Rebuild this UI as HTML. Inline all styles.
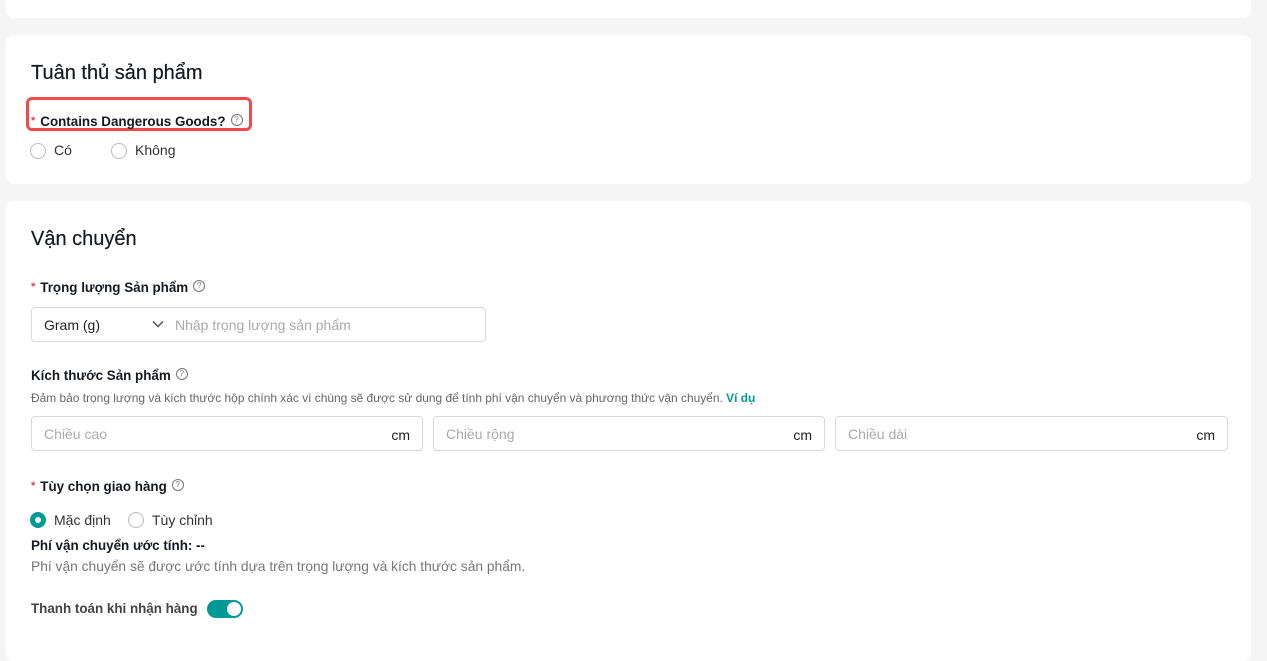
<!DOCTYPE html>
<html><head><meta charset="utf-8"><style>
*{box-sizing:border-box;margin:0;padding:0}
body{width:1267px;height:634px;overflow:hidden;background:#f5f5f5;font-family:"Liberation Sans",Arial,sans-serif;color:#161823;position:relative}
.card{position:absolute;left:6px;width:1245px;background:#fff;border-radius:8px}
.abs{position:absolute;white-space:nowrap}
.h{font-size:20px;color:#161823;-webkit-text-stroke:0.2px #161823}
.lbl{font-size:13.4px;font-weight:bold}
.star{color:#f0394b;font-size:11px;margin-right:5px;vertical-align:2px}
.q{display:inline-block;width:12px;height:12px;border:1px solid #777;border-radius:50%;font-size:8px;line-height:10px;text-align:center;color:#777;font-weight:normal;margin-left:5px;vertical-align:middle;position:relative;top:-2px}
.radio{position:absolute;width:16px;height:16px;border:1px solid #bbb;border-radius:50%}
.radio.on{border:5px solid #009995}
.t14{font-size:14px;color:#333}
.inp{position:absolute;height:35px;border:1px solid #d9d9d9;border-radius:4px;font-size:14px;color:#aaa}
</style></head><body>
<div class="card" style="top:-10px;height:28px"></div>
<div class="card" style="top:35px;height:149px"></div>
<div class="card" style="top:201px;height:460px"></div>

<div class="abs h" style="left:31px;top:62px">Tuân thủ sản phẩm</div>
<div class="abs" style="left:26px;top:97px;width:226px;height:34px;border:3px solid #f04a4a;border-radius:6px"></div>
<div class="abs lbl" style="left:31px;top:114px"><span class="star">*</span>Contains Dangerous Goods?<span class="q">?</span></div>
<div class="radio" style="left:30px;top:143px"></div><div class="abs t14" style="left:54px;top:142px">Có</div>
<div class="radio" style="left:111px;top:143px"></div><div class="abs t14" style="left:135px;top:142px">Không</div>

<div class="abs h" style="left:31px;top:228px">Vận chuyển</div>
<div class="abs lbl" style="left:31px;top:280px"><span class="star">*</span>Trọng lượng Sản phẩm<span class="q">?</span></div>
<div class="inp" style="left:31px;top:307px;width:455px">
 <span class="abs" style="left:12px;top:9px;color:#222">Gram (g)</span>
 <svg class="abs" style="left:120px;top:12px" width="12" height="8" viewBox="0 0 12 8"><path d="M1 1.5l5 5 5-5" fill="none" stroke="#555" stroke-width="1.5"/></svg>
 <span class="abs" style="left:143px;top:9px">Nhập trọng lượng sản phẩm</span>
</div>
<div class="abs lbl" style="left:31px;top:368px">Kích thước Sản phẩm<span class="q">?</span></div>
<div class="abs" style="left:31px;top:391px;font-size:11.95px;color:#666">Đảm bảo trọng lượng và kích thước hộp chính xác vì chúng sẽ được sử dụng để tính phí vận chuyển và phương thức vận chuyển. <span style="color:#009995;font-weight:bold">Ví dụ</span></div>
<div class="inp" style="left:31px;top:416px;width:392px"><span class="abs" style="left:12px;top:9px">Chiều cao</span><span class="abs" style="right:12px;top:10px;color:#222">cm</span></div>
<div class="inp" style="left:433px;top:416px;width:392px"><span class="abs" style="left:12px;top:9px">Chiều rộng</span><span class="abs" style="right:12px;top:10px;color:#222">cm</span></div>
<div class="inp" style="left:835px;top:416px;width:393px"><span class="abs" style="left:12px;top:9px">Chiều dài</span><span class="abs" style="right:12px;top:10px;color:#222">cm</span></div>

<div class="abs lbl" style="left:31px;top:479px"><span class="star">*</span>Tùy chọn giao hàng<span class="q">?</span></div>
<div class="radio on" style="left:30px;top:512px"></div><div class="abs t14" style="left:54px;top:512px">Mặc định</div>
<div class="radio" style="left:128px;top:512px"></div><div class="abs t14" style="left:152px;top:512px">Tùy chỉnh</div>
<div class="abs lbl" style="left:31px;top:538px">Phí vận chuyển ước tính: --</div>
<div class="abs" style="left:31px;top:559px;font-size:13.8px;color:#777">Phí vận chuyển sẽ được ước tính dựa trên trọng lượng và kích thước sản phẩm.</div>
<div class="abs lbl" style="left:31px;top:601px;color:#444">Thanh toán khi nhận hàng</div>
<div class="abs" style="left:207px;top:600px;width:36px;height:18px;border-radius:9px;background:#009995"><div class="abs" style="left:20px;top:2px;width:14px;height:14px;border-radius:50%;background:#fff"></div></div>
</body></html>
